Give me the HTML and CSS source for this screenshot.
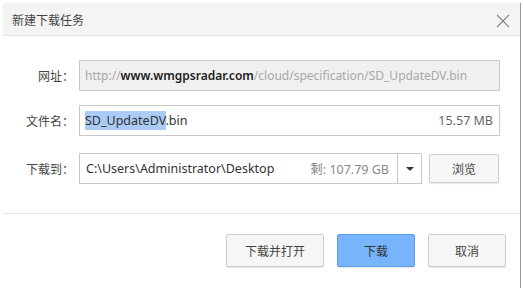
FILE: index.html
```html
<html>
<head>
	<meta charset="utf-8">
	<link rel="stylesheet" href="styles.css">
	<title>新建下载任务</title>
</head>
<body>
	<div id="dialog">
		<div id="titlebar">
			<span id="title">新建下载任务</span>
			<svg id="closebtn" width="14" height="14" viewBox="0 0 14 14"><path d="M1 1L13 13M13 1L1 13" stroke="#8a8a8a" stroke-width="1.2" fill="none"/></svg>
		</div>

		<div id="form">
			<div class="row">
				<div class="label">网址：</div>
				<div class="box disabled">
					<span class="url"><span class="muted">http://</span><b>www.wmgpsradar.com</b><span class="muted">/cloud/specification/SD_UpdateDV.bin</span></span>
				</div>
			</div>
			<div class="row">
				<div class="label">文件名：</div>
				<div class="box">
					<span class="filename"><span class="sel">SD_UpdateDV</span>.bin</span>
					<span class="size">15.57 MB</span>
				</div>
			</div>
			<div class="row saverow">
				<div class="label">下载到：</div>
				<div class="box pathbox">
					<span class="path">C:\Users\Administrator\Desktop</span>
					<span class="size free">剩: 107.79 GB</span>
					<div class="dropdown"><span class="arrow"></span></div>
				</div>
				<button class="btn browse">浏览</button>
			</div>
		</div>

		<div id="footer">
			<button class="btn big">下载并打开</button>
			<button class="btn big primary">下载</button>
			<button class="btn big">取消</button>
		</div>
	</div>
</body>
</html>
```

FILE: styles.css
```css
html, body{
	margin: 0;
	background-color: #fff;
	font-family: "Noto Sans", "Noto Sans CJK SC", sans-serif;
	color: #333;
}
#dialog{
	margin: 3px 0 0 3px;
	width: 518px;
	height: 285px;
	border-right: 1px solid #9a9a9a;
	box-sizing: border-box;
}
#titlebar{
	height: 32px;
	background-color: #f4f4f4;
	border-bottom: 1px solid #e2e2e2;
	display: flex;
	align-items: center;
	justify-content: space-between;
	padding: 0 10px 0 9px;
}
#title{
	font-family: "Noto Sans CJK SC", sans-serif;
	font-size: 12px;
	color: #444;
}
#closebtn{
	margin-right: 0;
	margin-top: 4px;
}
#form{
	padding-top: 24px;
	border-bottom: 1px solid #e4e4e4;
	padding-bottom: 29px;
}
.row{
	display: flex;
	align-items: center;
	height: 31px;
}
.row + .row{
	margin-top: 14px;
}
.saverow{
	margin-top: 17px !important;
}
.label{
	width: 71px;
	text-align: right;
	margin-right: 5px;
	font-family: "Noto Sans CJK SC", sans-serif;
	font-size: 12px;
	color: #444;
}
.box{
	width: 421px;
	height: 31px;
	box-sizing: border-box;
	border: 1px solid #c9c9c9;
	background-color: #fff;
	display: flex;
	align-items: center;
	padding: 0 6px 0 5px;
	font-size: 12.5px;
	white-space: nowrap;
	overflow: hidden;
}
.disabled{
	background-color: #f0f0f0;
}
.url{
	font-size: 12px;
}
.muted{
	color: #a8a8a8;
}
.url b{
	color: #222;
	font-weight: 600;
}
.filename{
	flex: 1;
	color: #333;
}
.sel{
	background-color: #a9cbf6;
	padding: 1px 0;
}
.size{
	color: #666;
}
.pathbox{
	width: 343px;
	padding-right: 0;
	padding-left: 6px;
}
.path{
	flex: 1;
	color: #333;
}
.free{
	color: #888;
	margin-right: 8px;
}
.dropdown{
	width: 23px;
	height: 100%;
	border-left: 1px solid #c9c9c9;
	display: flex;
	align-items: center;
	justify-content: center;
}
.arrow{
	width: 0;
	height: 0;
	border-left: 4px solid transparent;
	border-right: 4px solid transparent;
	border-top: 4px solid #333;
}
.btn{
	font-family: "Noto Sans CJK SC", sans-serif;
	font-size: 12px;
	color: #444;
	background-color: #f6f6f6;
	border: 1px solid #cdcdcd;
	border-radius: 2px;
	box-shadow: 0 1px 1px #e6e6e6;
	padding: 0;
}
.browse{
	width: 70px;
	height: 29px;
	margin-left: 7px;
}
#footer{
	display: flex;
	justify-content: flex-end;
	gap: 13px;
	padding: 20px 14px 0 0;
}
.big{
	width: 98px;
	height: 33px;
}
.big.primary,
.big:last-child{
	width: 78px;
}
.primary{
	background-color: #78b4fc;
	border-color: #5d9ee9;
	color: #333;
}
```
